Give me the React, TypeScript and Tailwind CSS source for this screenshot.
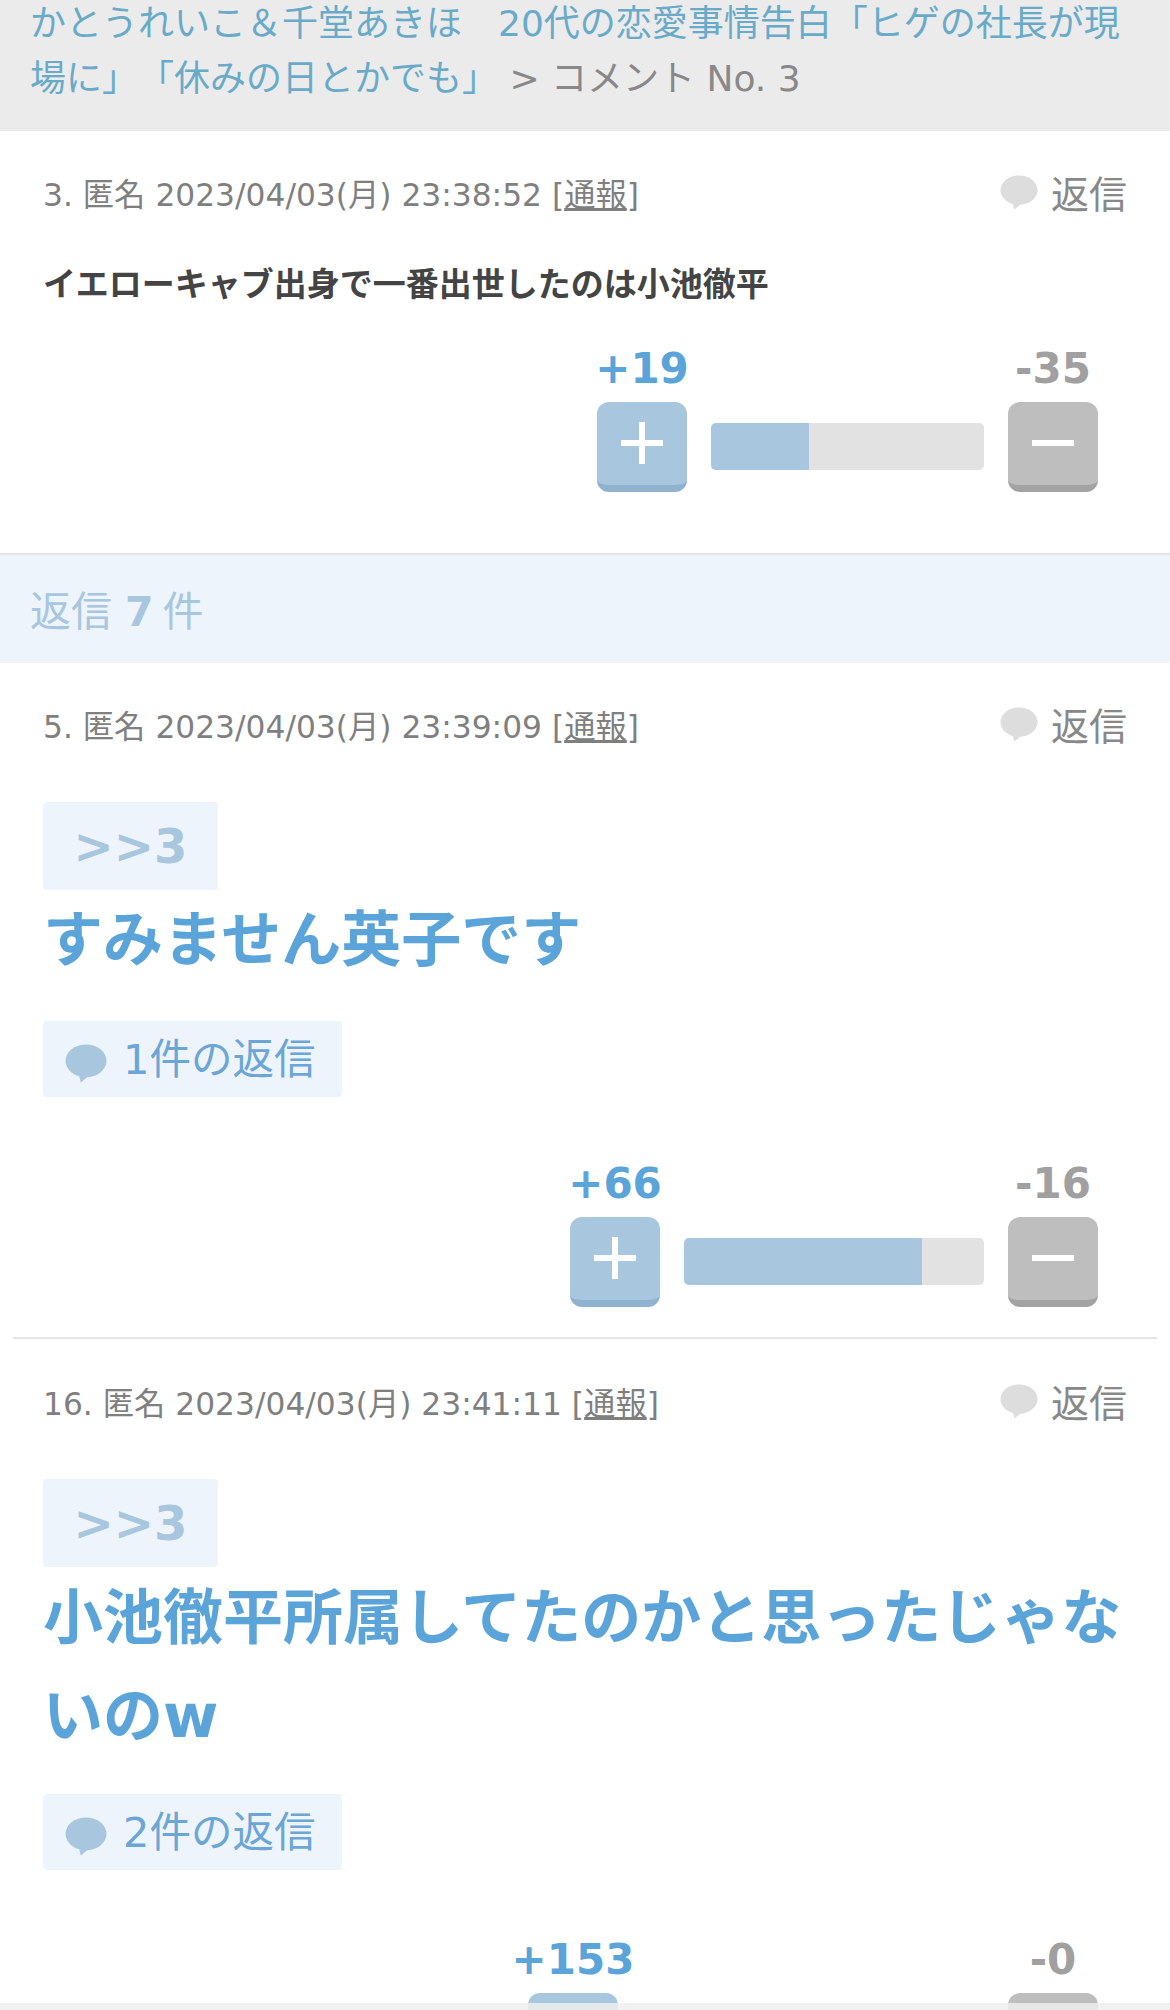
const BubbleIcon = ({ className }: { className: string }) => (
  <svg viewBox="0 0 40 36" className={className}>
    <ellipse cx="20" cy="15.5" rx="19.5" ry="15.5" fill="currentColor" />
    <path d="M13 27 L15 36 L25 28 Z" fill="currentColor" />
  </svg>
);

const Meta = ({ no, time }: { no: number; time: string }) => (
  <div className="flex items-start justify-between pl-[43px] pr-[43px]">
    <p className="text-[31.3px] leading-[44px] text-[#7f7f7f]">
      {no}. 匿名 {time} [<span className="underline">通報</span>]
    </p>
    <div className="flex items-center text-[38px] leading-[44px] text-[#888888]">
      <BubbleIcon className="mr-[13px] h-[37px] w-[38px] -translate-y-[3px] text-[#dddddd]" />
      返信
    </div>
  </div>
);

const Vote = ({ plus, minus, bar, fill }: { plus: string; minus: string; bar: number; fill: number }) => (
  <div className="flex items-start justify-end pr-[72px]">
    <div className="flex w-[90px] flex-col items-center">
      <span className="mb-[11px] whitespace-nowrap text-[42px] font-bold leading-[44px] text-[#5ba4d9]">{plus}</span>
      <div className="flex h-[90px] w-[90px] items-center justify-center rounded-[12px] border-b-[7px] border-[#8fb3cf] bg-[#a8c6de] pb-[2px]">
        <span className="relative block h-[6px] w-[42px] bg-white">
          <span className="absolute left-[18px] top-[-18px] block h-[42px] w-[6px] bg-white" />
        </span>
      </div>
    </div>
    <div className="mx-[24px] mt-[76px] h-[47px] overflow-hidden rounded-[5px] bg-[#e2e2e2]" style={{ width: bar }}>
      <div className="h-full bg-[#a8c6de]" style={{ width: fill }} />
    </div>
    <div className="flex w-[90px] flex-col items-center">
      <span className="mb-[11px] whitespace-nowrap text-[42px] font-bold leading-[44px] text-[#a0a0a0]">{minus}</span>
      <div className="flex h-[90px] w-[90px] items-center justify-center rounded-[12px] border-b-[7px] border-[#a3a3a3] bg-[#bebebe] pb-[2px]">
        <span className="block h-[6px] w-[42px] bg-white" />
      </div>
    </div>
  </div>
);

const Quote = () => (
  <div className="ml-[43px] mt-[53px] flex h-[88px] w-[175px] items-center justify-center rounded-[4px] bg-[#eef4fb] text-[48px] font-bold text-[#a8c6de]">
    &gt;&gt;3
  </div>
);

const ReplyChip = ({ label }: { label: string }) => (
  <div className="ml-[43px] flex h-[76px] w-[299px] items-center rounded-[4px] bg-[#eef4fb] pl-[22px] pt-[3px] text-[41.5px] text-[#6ba6d6]">
    <BubbleIcon className="mr-[16px] h-[39px] w-[42px] translate-y-[3px] text-[#a8c6de]" />
    {label}
  </div>
);

export default function App() {
  return (
    <div className="relative h-[2010px] w-[1170px] overflow-hidden bg-white font-['DejaVu_Sans','Noto_Sans_CJK_JP',sans-serif] [text-spacing-trim:space-all]">
      <header className="flow-root h-[131px] bg-[#ebebeb] px-[30px] text-[36px] leading-[55px] text-[#888888]">
        <span className="-mt-[4px] block">
          <span className="text-[#69aac9]">かとうれいこ＆千堂あきほ　20代の恋愛事情告白「ヒゲの社長が現場に」「休みの日とかでも」</span>
          {" "}&gt; コメント No. 3
        </span>
      </header>

      <section className="h-[422px] pt-[42px]">
        <Meta no={3} time="2023/04/03(月) 23:38:52" />
        <p className="mt-[46px] pl-[43px] text-[33px] font-bold leading-[44px] text-[#444444]">
          イエローキャブ出身で一番出世したのは小池徹平
        </p>
        <div className="mt-[40px]">
          <Vote plus="+19" minus="-35" bar={273} fill={98} />
        </div>
      </section>

      <div className="flex h-[110px] items-center border-t-[2px] border-b-[2px] border-t-[#e6e6e6] border-b-[#f3f3f3] bg-[#eef4fb] pl-[30px] pt-[10px] text-[41px] text-[#a8c6de]">
        返信<b className="ml-[13px] mr-[9px]">7</b>件
      </div>

      <section className="relative h-[676px] pt-[42px]">
        <Meta no={5} time="2023/04/03(月) 23:39:09" />
        <Quote />
        <p className="ml-[43px] mt-[10px] text-[60px] font-bold leading-[80px] text-[#5ba4d9]">すみません英子です</p>
        <div className="mt-[41px]">
          <ReplyChip label="1件の返信" />
        </div>
        <div className="mt-[65px]">
          <Vote plus="+66" minus="-16" bar={300} fill={238} />
        </div>
        <div className="absolute bottom-0 left-[13px] right-[13px] h-[2px] bg-[#e4e4e4]" />
      </section>

      <section className="pt-[43px]">
        <Meta no={16} time="2023/04/03(月) 23:41:11" />
        <Quote />
        <p className="ml-[43px] mr-[30px] mt-[2px] text-[60px] font-bold leading-[98px] text-[#5ba4d9]">
          小池徹平所属してたのかと思ったじゃないのw
        </p>
        <div className="mt-[29px]">
          <ReplyChip label="2件の返信" />
        </div>
        <div className="mt-[68px]">
          <Vote plus="+153" minus="-0" bar={342} fill={300} />
        </div>
      </section>

      {/* faint strip across the very bottom, lies over the vote buttons */}
      <div className="absolute bottom-0 left-0 right-0 h-[7px] bg-[#efefef]/85" />
    </div>
  );
}
